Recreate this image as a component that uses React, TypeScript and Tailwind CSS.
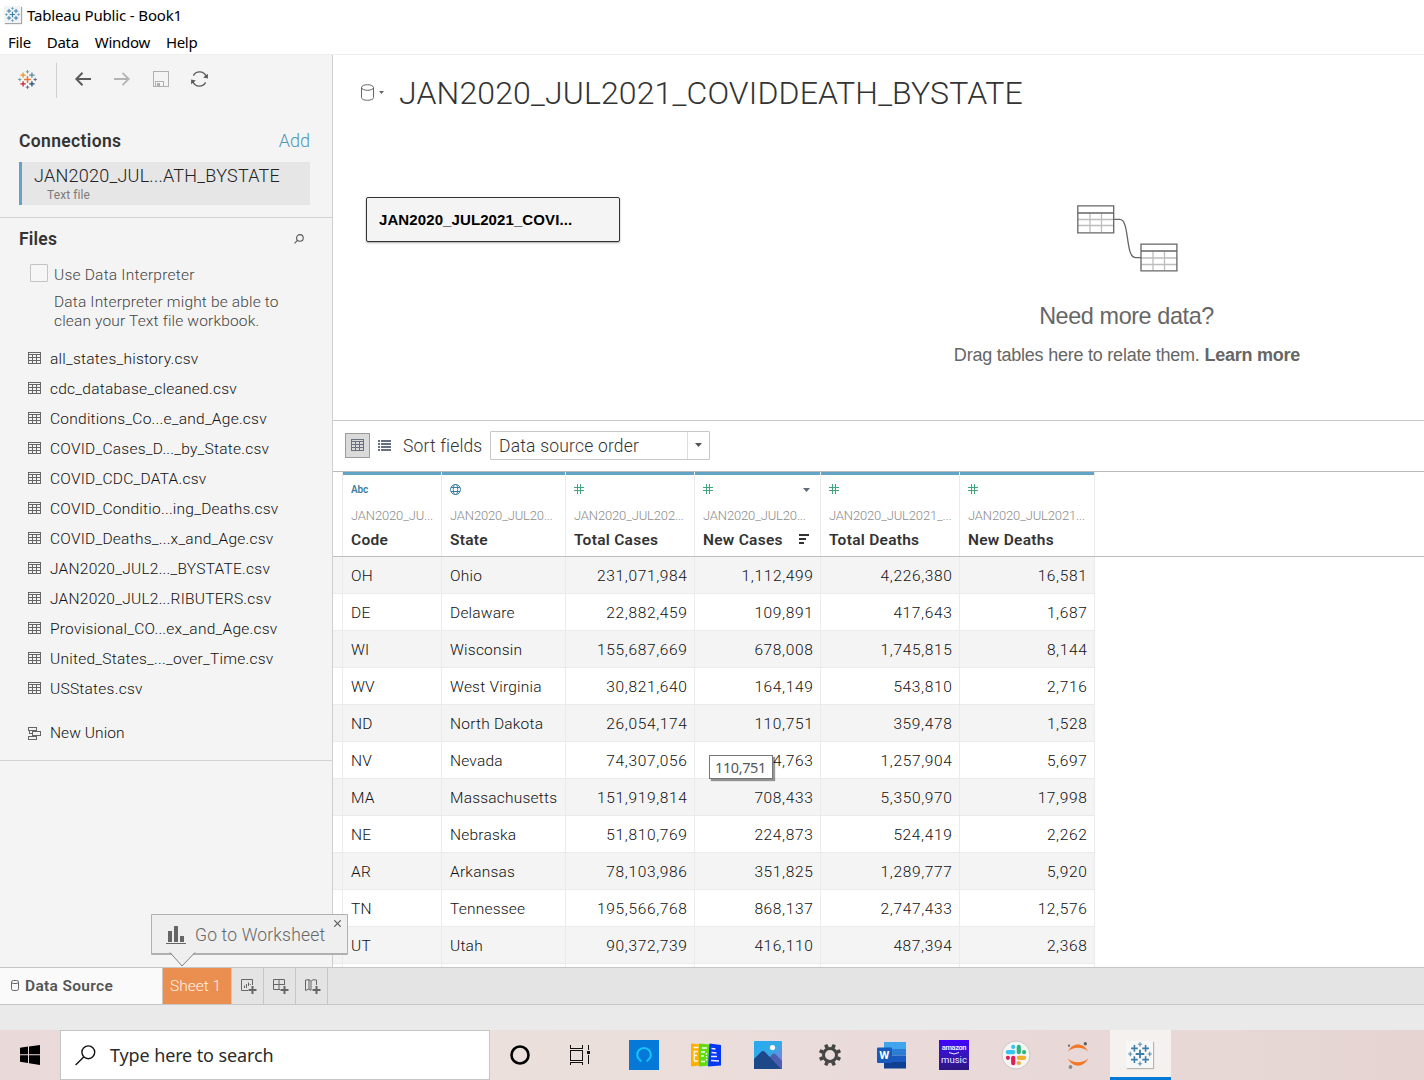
import type { ReactNode } from 'react';

const files = [
  'all_states_history.csv',
  'cdc_database_cleaned.csv',
  'Conditions_Co...e_and_Age.csv',
  'COVID_Cases_D..._by_State.csv',
  'COVID_CDC_DATA.csv',
  'COVID_Conditio...ing_Deaths.csv',
  'COVID_Deaths_...x_and_Age.csv',
  'JAN2020_JUL2..._BYSTATE.csv',
  'JAN2020_JUL2...RIBUTERS.csv',
  'Provisional_CO...ex_and_Age.csv',
  'United_States_..._over_Time.csv',
  'USStates.csv',
];

const columns = [
  { kind: 'abc', source: 'JAN2020_JU...', name: 'Code' },
  { kind: 'geo', source: 'JAN2020_JUL20...', name: 'State' },
  { kind: 'num', source: 'JAN2020_JUL202...', name: 'Total Cases' },
  { kind: 'num', source: 'JAN2020_JUL20...', name: 'New Cases', sorted: true },
  { kind: 'num', source: 'JAN2020_JUL2021_...', name: 'Total Deaths' },
  { kind: 'num', source: 'JAN2020_JUL2021...', name: 'New Deaths' },
];

const rows = [
  ['OH', 'Ohio', '231,071,984', '1,112,499', '4,226,380', '16,581'],
  ['DE', 'Delaware', '22,882,459', '109,891', '417,643', '1,687'],
  ['WI', 'Wisconsin', '155,687,669', '678,008', '1,745,815', '8,144'],
  ['WV', 'West Virginia', '30,821,640', '164,149', '543,810', '2,716'],
  ['ND', 'North Dakota', '26,054,174', '110,751', '359,478', '1,528'],
  ['NV', 'Nevada', '74,307,056', '4,763', '1,257,904', '5,697'],
  ['MA', 'Massachusetts', '151,919,814', '708,433', '5,350,970', '17,998'],
  ['NE', 'Nebraska', '51,810,769', '224,873', '524,419', '2,262'],
  ['AR', 'Arkansas', '78,103,986', '351,825', '1,289,777', '5,920'],
  ['TN', 'Tennessee', '195,566,768', '868,137', '2,747,433', '12,576'],
  ['UT', 'Utah', '90,372,739', '416,110', '487,394', '2,368'],
  ['', '', '', '', '', ''],
];

const gridCols = 'grid grid-cols-[10px_99px_124px_129px_126px_139px_135px]';

const plus = (x: number, y: number, r: number) => `M${x - r} ${y}h${2 * r}M${x} ${y - r}v${2 * r}`;

function TableauMark({ size, mono }: { size: number; mono?: boolean }) {
  const c = mono
    ? ['#3b7ea8', '#3b7ea8', '#3b7ea8', '#3b7ea8', '#3b7ea8', '#5b93b5', '#5b93b5', '#5b93b5', '#5b93b5']
    : ['#e8762c', '#eb9129', '#5b879b', '#c72035', '#1f457e', '#7099a6', '#5b6591', '#7099a6', '#5b6591'];
  return (
    <svg width={size} height={size} viewBox="0 0 18 18" fill="none" strokeWidth="1.2">
      <path d={plus(9, 9, 3.2)} stroke={c[0]} strokeWidth="1.4" />
      <path d={plus(4.8, 4.8, 2.5)} stroke={c[1]} />
      <path d={plus(13.2, 4.8, 2.5)} stroke={c[2]} />
      <path d={plus(4.8, 13.2, 2.5)} stroke={c[3]} />
      <path d={plus(13.2, 13.2, 2.5)} stroke={c[4]} />
      <path d={plus(9, 1.7, 1.6)} stroke={c[5]} strokeWidth="0.9" />
      <path d={plus(9, 16.3, 1.6)} stroke={c[6]} strokeWidth="0.9" />
      <path d={plus(1.7, 9, 1.6)} stroke={c[7]} strokeWidth="0.9" />
      <path d={plus(16.3, 9, 1.6)} stroke={c[8]} strokeWidth="0.9" />
    </svg>
  );
}

function GridIcon({ color = '#666666' }: { color?: string }) {
  return (
    <svg width="13" height="12" viewBox="0 0 13 12" fill="none" stroke={color} shapeRendering="crispEdges">
      <path d="M.5.5h12v11H.5zM0 2.5h13M0 5.5h13M0 8.5h13M4.5 2.5v9M8.5 2.5v9" />
    </svg>
  );
}

function HashIcon() {
  return (
    <svg className="mb-[2px]" width="10" height="10" viewBox="0 0 10 10" fill="none" stroke="#3fa57c" shapeRendering="crispEdges">
      <path d="M3.5 0v10M6.5 0v10M0 3.5h10M0 6.5h10" />
    </svg>
  );
}

function GlobeIcon() {
  return (
    <svg width="11" height="11" viewBox="0 0 11 11" fill="none" stroke="#3b7f9e" strokeWidth="1">
      <circle cx="5.5" cy="5.5" r="5" />
      <ellipse cx="5.5" cy="5.5" rx="2.2" ry="5" />
      <path d="M1 3.5h9M1 7.500h9" />
    </svg>
  );
}

function ToolbarIcons() {
  return (
    <div className="flex h-[48px] items-center pl-[18px]">
      <TableauMark size={19} />
      <div className="mt-[3px] ml-[19px] h-[35px] w-px bg-[#cfcfcf]" />
      <svg className="ml-[18px]" width="16" height="14" viewBox="0 0 16 14" fill="none" stroke="#5a5a5a" strokeWidth="2">
        <path d="M16 7H1.5M7.5.8 1.3 7l6.200 6.200" />
      </svg>
      <svg className="ml-[23px]" width="16" height="14" viewBox="0 0 16 14" fill="none" stroke="#b4b4b4" strokeWidth="1.8">
        <path d="M0 7h14.500M8.500.8 14.700 7l-6.200 6.200" />
      </svg>
      <svg className="ml-[23px]" width="16" height="16" viewBox="0 0 16 16" fill="none" stroke="#b0b0b0" shapeRendering="crispEdges">
        <path d="M.5.5h15v15H.5zM2.500 15.500v-5h8v5" />
        <path d="M4 12h3v3H4z" fill="#b0b0b0" stroke="none" />
      </svg>
      <svg className="ml-[22px]" width="17" height="16" viewBox="0 0 17 16" fill="none" stroke="#5a5a5a" strokeWidth="1.300">
        <path d="M2.400 4.600A7 7 0 0 1 15 5M14.600 11.400A7 7 0 0 1 2 11" />
        <path d="M16.900 2.700v4.700l-4.800-.9zM.1 13.300V8.600l4.800.9z" fill="#5a5a5a" stroke="none" />
      </svg>
    </div>
  );
}

function Sidebar() {
  return (
    <aside className="flex w-[333px] shrink-0 flex-col border-r border-[#cfcfcf] bg-[#f4f4f4]">
      <ToolbarIcons />
      <div className="mt-[25px] flex h-[26px] items-center justify-between pr-[22px] pl-[19px]">
        <h2 className="text-[17.500px] font-semibold tracking-[0.35px] text-[#333]">Connections</h2>
        <span className="pb-[2px] text-[18px] font-light text-[#4f97b5]">Add</span>
      </div>
      <div className="mt-[8px] mr-[22px] ml-[19px] h-[43px] border-l-[3px] border-[#62a3c6] bg-[#e6e6e6] pl-[12px] whitespace-nowrap">
        <div className="pt-[3px] text-[18px] leading-[21px] font-light tracking-[0.24px] text-[#222]">JAN2020_JUL...ATH_BYSTATE</div>
        <div className="pt-px pl-[13px] text-[12px] leading-[17px] tracking-[0.1px] text-[#7b7b7b]">Text file</div>
      </div>
      <div className="mt-[12px] flex h-[41px] items-center justify-between border-t border-[#d2d2d2] pr-[28px] pl-[19px]">
        <h2 className="pt-[2px] text-[17.500px] font-semibold tracking-[0.2px] text-[#333]">Files</h2>
        <svg className="mt-px" width="10" height="10" viewBox="0 0 10 10" fill="none" stroke="#555" strokeWidth="1.1">
          <circle cx="5.900" cy="3.900" r="3.300" />
          <path d="M3.500 6.300.5 9.300" />
        </svg>
      </div>
      <div className="mt-[6px] flex h-[18px] items-center pl-[30px]">
        <div className="h-[18px] w-[18px] rounded-[1px] border border-[#c4c4c4] bg-[#f6f6f6]" />
        <span className="pt-[4px] pl-[6px] text-[15.500px] leading-[20px] font-[350] tracking-[0.22px] text-[#444]">Use Data Interpreter</span>
      </div>
      <p className="mt-[11px] pl-[54px] text-[15.500px] leading-[19px] font-[350] tracking-[0.16px] whitespace-nowrap text-[#444]">
        Data Interpreter might be able to
        <br />
        clean your Text file workbook.
      </p>
      <ul className="mt-[13px] flex flex-col">
        {files.map((f) => (
          <li key={f} className="flex h-[30px] items-center pl-[28px] text-[15.500px] font-[350] tracking-[0.25px] text-[#111]">
            <div className="mb-[2px]">
              <GridIcon />
            </div>
            <span className="pt-[2px] pl-[9px]">{f}</span>
          </li>
        ))}
      </ul>
      <div className="mt-[14px] flex h-[43px] items-start border-b border-[#d2d2d2] pl-[28px] text-[15.500px] font-[350] tracking-[0.08px] text-[#111]">
        <svg className="mt-[9px]" width="13" height="13" viewBox="0 0 13 13" fill="none" stroke="#666" shapeRendering="crispEdges">
          <path d="M.5.5h8v3h-8zM4.500 4.500h8v4h-8zM.5 9.500h8v3h-8zM1.500 3.500v3h3" />
        </svg>
        <span className="pl-[9px] leading-[30px]">New Union</span>
      </div>
    </aside>
  );
}

function Canvas() {
  return (
    <section className="flex h-[366px] flex-col border-b border-[#c9c9c9]">
      <div className="flex h-[75px] items-center pl-[28px]">
        <svg width="13" height="17" viewBox="0 0 13 17" fill="none" stroke="#666">
          <ellipse cx="6.500" cy="3.500" rx="6" ry="2.800" />
          <path d="M.5 3.500v10c0 1.700 2.500 2.800 6 2.800s6-1.100 6-2.800v-10" />
        </svg>
        <svg className="ml-[5px]" width="5" height="3" viewBox="0 0 5 3">
          <path d="M0 0h5L2.500 3z" fill="#666" />
        </svg>
        <h1 className="pl-[15px] text-[32px] font-light tracking-[0.14px] text-[#333]">JAN2020_JUL2021_COVIDDEATH_BYSTATE</h1>
      </div>
      <div className="flex pt-[66px] pl-[33px] font-['Liberation_Sans',sans-serif]">
        <div className="mt-px flex h-[45px] w-[254px] items-center rounded-[2px] border border-[#333] bg-[#f4f4f4] pt-px pl-[12px] text-[15px] font-bold tracking-[0.1px] text-black shadow-[0_1px_2px_rgba(0,0,0,0.35)]">
          JAN2020_JUL2021_COVI...
        </div>
        <div className="ml-[307px] flex w-[400px] flex-col items-center pt-[9px] text-[#666]">
          <svg width="101" height="67" viewBox="0 0 101 67" fill="none" strokeWidth="1.300">
            <path d="M13 8.500V27M24.500 8.500V27M1 14.500h36M1 20.500h36M76 46.500V65M87.500 46.500V65M64 53h36M64 59.500h36" stroke="#bdbdbd" />
            <path d="M.8.8h35.900v27H.8zM.8 8h36M64 39.200h35.900v26.600H64zM64 46h36M36.700 14.300h6C53 14.300 48 52.700 58.500 52.700H64" stroke="#666" />
          </svg>
          <div className="mt-[29px] pr-px text-[23.400px] leading-[30px] tracking-[-0.4px]">Need more data?</div>
          <div className="mt-[13px] text-[18px] leading-[22px] tracking-[-0.230px] whitespace-nowrap">
            Drag tables here to relate them. <b className="font-bold">Learn more</b>
          </div>
        </div>
      </div>
    </section>
  );
}

function SortBar() {
  return (
    <div className="flex h-[50px] items-center pb-[2px] pl-[12px] text-[17.500px] font-light text-[#333]">
      <div className="flex h-[25px] w-[25px] items-center justify-center border border-[#9b9b9b] bg-[#dadada]">
        <GridIcon color="#667080" />
      </div>
      <svg className="ml-[8px]" width="13" height="11" viewBox="0 0 13 11" fill="#667080" shapeRendering="crispEdges">
        <path d="M0 0h2v2H0zM3 0h10v2H3zM0 3h2v2H0zM3 3h10v2H3zM0 6h2v2H0zM3 6h10v2H3zM0 9h2v2H0zM3 9h10v2H3z" />
      </svg>
      <span className="ml-[12px] w-[87px] pt-[3px] tracking-[0.15px]">Sort fields</span>
      <div className="flex h-[29px] w-[220px] items-center rounded-[1px] border border-[#c8c8c8]">
        <span className="flex-1 pt-[3px] pl-[8px] tracking-[0.2px]">Data source order</span>
        <span className="flex h-full w-[22px] items-center justify-center border-l border-[#dcdcdc]">
          <svg width="7" height="4" viewBox="0 0 7 4">
            <path d="M0 0h7L3.500 4z" fill="#555" />
          </svg>
        </span>
      </div>
    </div>
  );
}

function DataTable() {
  return (
    <div className="relative h-[496px] overflow-hidden border-t border-[#bcbcbc]">
      <div className={`${gridCols} h-[85px] border-b border-[#bcbcbc]`}>
        <div className="border-r border-[#ebebeb]" />
        {columns.map((c) => (
          <div key={c.name} className="flex flex-col overflow-hidden border-r border-[#ebebeb] whitespace-nowrap">
            <div className="h-[3px] shrink-0 bg-[#62a3c6]" />
            <div className="flex h-[29px] items-center justify-between pr-[10px] pl-[8px]">
              {c.kind === 'abc' && <span className="text-[10px] font-semibold tracking-[-0.1px] text-[#3b7f9e]">Abc</span>}
              {c.kind === 'geo' && <GlobeIcon />}
              {c.kind === 'num' && <HashIcon />}
              {c.sorted && (
                <svg className="mt-px" width="7" height="4" viewBox="0 0 7 4">
                  <path d="M0 0h7L3.500 4z" fill="#5f6b80" />
                </svg>
              )}
            </div>
            <div className="pl-[8px] text-[13px] leading-[24px] font-light tracking-[-0.15px] text-[#8c8c8c]">{c.source}</div>
            <div className="flex items-center justify-between pr-[11px] pl-[8px]">
              <span className="text-[15.500px] leading-[24px] font-semibold tracking-[0.27px] text-[#333]">{c.name}</span>
              {c.sorted && (
                <svg className="mb-[2px]" width="10" height="10" viewBox="0 0 10 10" fill="#333" shapeRendering="crispEdges">
                  <path d="M0 0h10v2H0zM0 4h7v2H0zM0 8h5v2H0z" />
                </svg>
              )}
            </div>
          </div>
        ))}
      </div>
      {rows.map((r, i) => (
        <div
          key={r[0]}
          className={`${gridCols} h-[37px] w-[762px] text-[15.500px] leading-[38px] font-[350] text-[#111] ${i % 2 ? 'bg-white' : 'bg-[#f4f4f4]'}`}
        >
          <div className="border-r border-b border-[#ebebeb]" />
          {r.map((v, j) => (
            <div
              key={j}
              className={`h-[37px] border-r border-b border-[#ebebeb] whitespace-nowrap ${
                j < 2 ? 'pl-[8px] tracking-[0.22px]' : 'pr-[6.500px] text-right tracking-[0.65px]'
              }`}
            >
              {v}
            </div>
          ))}
        </div>
      ))}
      <div className="absolute top-[283px] left-[376px] flex h-[24px] w-[64px] items-center border border-[#767676] bg-white pt-px pl-[5px] text-[14.500px] tracking-[-0.4px] text-[#575757] shadow-[2px_2px_1px_rgba(0,0,0,0.4)] font-['Noto_Sans',sans-serif]">
        110,751
      </div>
    </div>
  );
}

function AddIcon({ kind }: { kind: 'sheet' | 'dash' | 'story' }) {
  return (
    <svg className="mt-px ml-[2px]" width="16" height="16" viewBox="0 0 16 16" fill="none" stroke="#666">
      {kind === 'sheet' && <path d="M7 11.500H.5V.5h11V6M3.500 9V6.500M5.500 9V5M7.500 7V3.500M9.300 6V5" />}
      {kind === 'dash' && <path d="M7 10.500H.5V.5h11V6M0 5.500h12M6 .5v10" />}
      {kind === 'story' && <path d="M6 11.500 4 10 .5 11.500V1L4 .7l2 1.600L8 .7l3.500.3V6M4 .7V10M6 2.300v9" />}
      <path d="M11.500 7v8M7.500 11h8" strokeWidth="2" />
    </svg>
  );
}

function SheetTabs() {
  return (
    <div className="relative flex h-[38px] border-y border-[#c6c6c6] bg-[#e4e4e4]">
      <div className="flex w-[162px] items-center bg-[#fafafa] pl-[11px] text-[15.500px] font-semibold tracking-[0.33px] text-[#555]">
        <svg className="mb-px" width="8" height="11" viewBox="0 0 8 11" fill="none" stroke="#666">
          <rect x=".5" y=".5" width="7" height="10" rx="1.800" />
          <path d="M.5 2.800c1.500 1 5.500 1 7 0" />
        </svg>
        <span className="pt-[2px] pl-[6px]">Data Source</span>
      </div>
      <div className="flex w-[70px] items-center border-x border-[#d0c4bb] bg-[#eb8f50] pt-[2px] pl-[7px] text-[15.500px] font-[350] text-[#fff3ea]">Sheet 1</div>
      {(['sheet', 'dash', 'story'] as const).map((k) => (
        <div key={k} className="flex w-[32px] items-center justify-center border-r border-[#c6c6c6]">
          <AddIcon kind={k} />
        </div>
      ))}
      <div className="absolute -top-[54px] left-[151px] h-[54px] w-[197px]">
        <div className="flex h-[41px] items-center rounded-[1px] border border-b-2 border-[#b0b0b0] bg-[#efefef] pl-[14px]">
          <svg className="mt-[2px]" width="20" height="18" viewBox="0 0 20 18" fill="#666" shapeRendering="crispEdges">
            <path d="M2 5h4v11H2zM8 0h4v16H8zM14 10h4v6h-4zM0 17h20v1H0z" />
          </svg>
          <span className="pt-[3px] pl-[9px] text-[17.500px] font-light tracking-[0.18px] text-[#666]">Go to Worksheet</span>
        </div>
        <svg className="absolute top-[38px] left-[18px]" width="27" height="15" viewBox="0 0 27 15">
          <path d="M1 .5 13 14 26 .5" fill="#efefef" stroke="#666" strokeWidth=".8" />
        </svg>
        <svg className="absolute top-[6px] right-[7px]" width="7" height="7" viewBox="0 0 7 7" stroke="#555" strokeWidth="1.100">
          <path d="m.3.3 6.400 6.400M6.700.3.3 6.700" />
        </svg>
      </div>
    </div>
  );
}

function Task({ children }: { children: ReactNode }) {
  return <div className="flex w-[62px] items-center justify-center">{children}</div>;
}

function Taskbar() {
  return (
    <div className="flex h-[50px] bg-linear-to-r from-[#e9dad9] via-[#e9dcda] to-[#e5d4d2]">
      <div className="flex w-[60px] items-center justify-center">
        <svg width="20" height="20" viewBox="0 0 20 20">
          <path d="M0 2.800 8 1.600V9.300H0zM9 1.500 20 0v9.300H9zM0 10.300h8V18l-8-1.200zM9 10.300h11V20L9 18.300z" fill="#000" />
        </svg>
      </div>
      <div className="flex w-[430px] items-center border border-[#c5c5c5] bg-white pl-[14px] font-['Noto_Sans',sans-serif] text-[18px] tracking-[-0.120px] text-[#2b2b2b]">
        <svg width="21" height="21" viewBox="0 0 21 21" fill="none" stroke="#111" strokeWidth="1.400">
          <circle cx="13.300" cy="7.300" r="6.400" />
          <path d="M8.700 12 .6 20" />
        </svg>
        <span className="pl-[14px]">Type here to search</span>
      </div>
      <div className="flex flex-1 bg-linear-to-r from-[#ebe0dc] via-[#e9dad9] to-[#e5d4d2]">
        <div className="flex w-[60px] items-center justify-center">
          <svg width="20" height="20" viewBox="0 0 20 20">
            <circle cx="10" cy="10" r="8.500" fill="none" stroke="#000" strokeWidth="2.600" />
          </svg>
        </div>
        <div className="flex w-[63px] items-center pl-[20px]">
          <svg width="20" height="20" viewBox="0 0 20 20" fill="none" stroke="#111" shapeRendering="crispEdges">
            <path d="M.5 0v3.500h12V0M.5 5.500h12v10H.5zM.5 20v-2.500h12V20M18.500 0v5M18.500 10v9" />
            <path d="M17 6h3v3h-3z" fill="#111" stroke="none" />
          </svg>
        </div>
        <Task>
          <svg width="30" height="30" viewBox="0 0 30 30">
            <path d="M0 0h30v30H0z" fill="#0679d8" />
            <path d="M11.800 20.800a6.800 6.800 0 1 1 6.400 0" fill="none" stroke="#15c5fa" strokeWidth="2" strokeLinecap="round" />
          </svg>
        </Task>
        <Task>
          <svg width="30" height="24" viewBox="0 0 30 24">
            <path d="M0 .5 10 1.500v21L0 23.500z" fill="#ffb000" />
            <path d="M8 .5 19 1.500v21L8 23.500z" fill="#61dc12" />
            <path d="M18.500.5 30 2v20.500l-13 1z" fill="#0636f5" />
            <path d="M2.500 4.500h5M2.500 8.500H7M3 12.500h3M3 18h4M3.200 8.500v9.500M11 5h5M10 9h4M10 13h3M10 18.500h4M15.500 10v1.500M15.500 13v1.500M15.500 16v1.500M20.500 5.500l4 .5M20.500 9.500l5 .5M20 13.500h6M20 17.500l8 .5" stroke="#fff" strokeWidth="1.300" fill="none" opacity=".9" />
          </svg>
        </Task>
        <Task>
          <svg width="28" height="28" viewBox="0 0 28 28">
            <defs>
              <linearGradient id="sky" x2="1" y2="1">
                <stop stopColor="#24aaf0" />
                <stop offset=".5" stopColor="#35a9e8" />
                <stop offset="1" stopColor="#a56bd0" />
              </linearGradient>
            </defs>
            <rect width="28" height="28" rx="1" fill="url(#sky)" />
            <path d="M12 20 18.500 13q1.500-1 3 0L28 20v8H12z" fill="#4c5fb3" />
            <path d="M0 18 7.500 10.500q1.500-1 3 0L27 28H0z" fill="#1c4788" />
            <circle cx="18.500" cy="6.500" r="2.600" fill="#fff" />
          </svg>
        </Task>
        <Task>
          <svg className="-ml-px" width="22" height="22" viewBox="-11 -11 22 22">
            <circle r="6.500" fill="none" stroke="#454545" strokeWidth="3" />
            <g fill="#454545">
              {[22.5, 67.5, 112.5, 157.5, 202.5, 247.5, 292.5, 337.5].map((a) => (
                <path key={a} d="M-2-7.500-1.600-11.200h3.200L2-7.500z" transform={`rotate(${a})`} />
              ))}
            </g>
          </svg>
        </Task>
        <Task>
          <svg width="30" height="28" viewBox="0 0 30 28">
            <path d="M7 1h22v7H7z" fill="#41a5ee" />
            <path d="M7 8h22v6.500H7z" fill="#2b7cd3" />
            <path d="M7 14.500h22V21H7z" fill="#185abd" />
            <path d="M7 21h22v6.500H7z" fill="#103f91" />
            <rect y="6.500" width="15" height="15.500" rx="1" fill="#185abd" />
            <text x="7.400" y="18.300" textAnchor="middle" fontSize="11.500" fontWeight="700" fill="#fff">W</text>
          </svg>
        </Task>
        <Task>
          <div className="flex h-[30px] w-[30px] flex-col items-center bg-linear-to-b from-[#4200ff] to-[#2c1580] pt-[3px] text-[#efeaff]">
            <span className="text-[7.500px] leading-[10px] font-bold tracking-[-0.4px]">amazon</span>
            <svg className="-mt-px" width="12" height="3" viewBox="0 0 12 3" fill="none" stroke="#efeaff">
              <path d="M1 .5q5 3 10 0" />
            </svg>
            <span className="text-[9.500px] leading-[10px]">music</span>
          </div>
        </Task>
        <Task>
          <svg width="30" height="30" viewBox="0 0 30 30">
            <circle cx="15" cy="15" r="14" fill="#f6f5f5" stroke="#cdc6c5" />
            <g strokeWidth="4.200" strokeLinecap="round">
              <path d="M12.200 6.900h.01M6.800 12.200h5.400" stroke="#36c5f0" />
              <path d="M17.800 6.800v5.400M23.100 12.200h.01" stroke="#2eb67d" />
              <path d="M17.800 17.800h5.400M17.800 23.100h.01" stroke="#ecb22e" />
              <path d="M12.200 17.800v5.400M6.900 17.800h.01" stroke="#e01e5a" />
            </g>
          </svg>
        </Task>
        <Task>
          <svg width="22" height="28" viewBox="0 0 22 28">
            <path d="M1 10.500C5 1 17 1 21 10.500 16 5.500 6 5.500 1 10.500zM1 17.500C5 27 17 27 21 17.500 16 22.500 6 22.500 1 17.500z" fill="#f37726" />
            <circle cx="18.300" cy="2.800" r="1.700" fill="#616262" />
            <circle cx="2" cy="4.700" r="1.100" fill="#616262" />
            <circle cx="3.500" cy="26" r="1.900" fill="#8b8b8b" />
          </svg>
        </Task>
        <div className="ml-px flex w-[61px] items-center justify-center border-b-[3px] border-[#0078d7] bg-[#f5f1ee] pt-px pr-[2px]">
          <div className="flex h-[27px] w-[27px] items-center justify-center bg-[#f8f7f7] shadow-[1px_1px_1px_rgba(0,0,0,0.25)]">
            <TableauMark size={24} mono />
          </div>
        </div>
      </div>
    </div>
  );
}

export default function App() {
  return (
    <div className="flex h-[1080px] w-[1424px] flex-col overflow-hidden bg-white font-[Roboto,sans-serif]">
      <header className="h-[55px] shrink-0 border-b border-[#ededed] font-['Noto_Sans',sans-serif] text-[15px] tracking-[-0.150px] text-black">
        <div className="flex h-[30px] items-center pl-[4px]">
          <div className="mb-[2px] flex h-[17px] w-[17px] items-center justify-center bg-[#f1f3f5] shadow-[1px_1px_1px_rgba(0,0,0,0.35)]">
            <TableauMark size={15} mono />
          </div>
          <span className="pl-[6px]">Tableau Public - Book1</span>
        </div>
        <nav className="flex h-[24px] items-center gap-[16px] pl-[8px] tracking-[-0.3px]">
          <span>File</span>
          <span>Data</span>
          <span>Window</span>
          <span>Help</span>
        </nav>
      </header>
      <div className="flex h-[912px] shrink-0">
        <Sidebar />
        <main className="flex min-w-0 flex-1 flex-col">
          <Canvas />
          <SortBar />
          <DataTable />
        </main>
      </div>
      <SheetTabs />
      <div className="h-[25px] shrink-0 bg-[#eaeaea]" />
      <Taskbar />
    </div>
  );
}
